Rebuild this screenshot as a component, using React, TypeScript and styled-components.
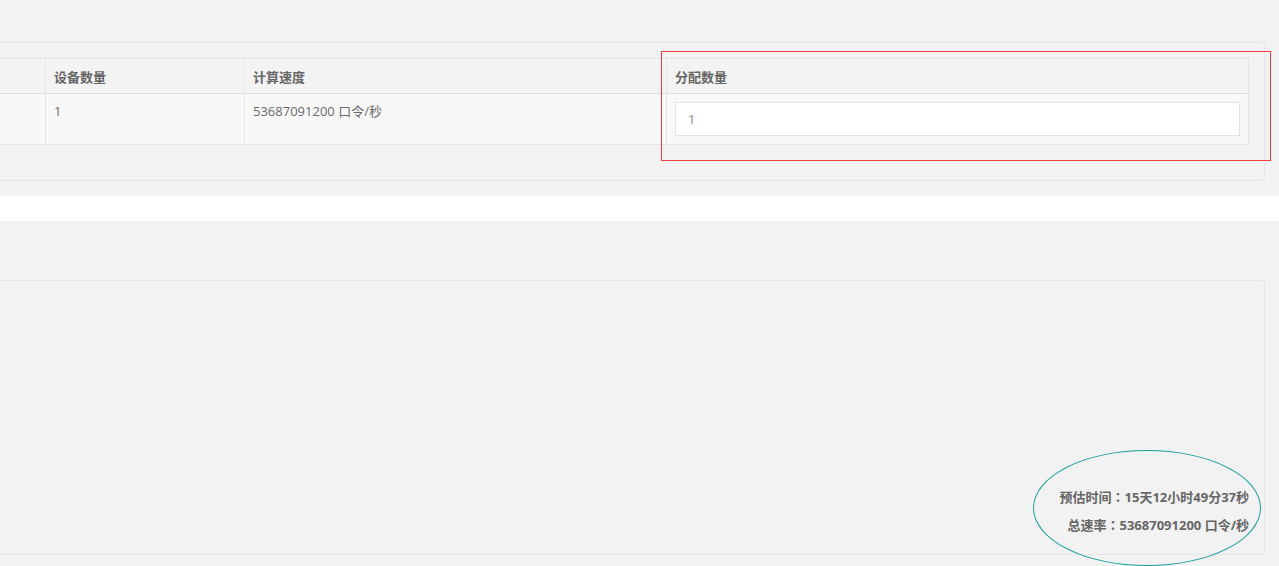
import React from "react";
import styled, { createGlobalStyle } from "styled-components";

const Global = createGlobalStyle`
  html, body { margin: 0; padding: 0; }
  body {
    background: #f2f2f2;
    font-family: "Open Sans", "Noto Sans CJK SC", sans-serif;
    font-size: 13px;
    color: #666;
    overflow: hidden;
  }
`;

const Page = styled.div`
  position: relative;
  width: 1279px;
  height: 566px;
  overflow: hidden;
`;

const TopSection = styled.section`
  padding: 42px 14px 15px 0;
`;

const Panel = styled.div<{ $h?: number }>`
  margin-left: -100px;
  border: 1px solid #e6e6e6;
  border-radius: 3px;
  background: #f2f2f2;
  box-sizing: border-box;
  ${(p) => (p.$h ? `height: ${p.$h}px;` : "")}
`;

const TablePanel = styled(Panel)`
  padding: 15px 15px 35px 15px;
`;

const Table = styled.table`
  width: 100%;
  table-layout: fixed;
  border-collapse: collapse;
  border: 1px solid #e3e3e3;
`;

const Th = styled.th`
  text-align: left;
  font-weight: 700;
  color: #666;
  background: #f3f3f3;
  height: 35px;
  padding: 0 8px;
  border-left: 1px solid #e6e6e6;
  border-bottom: 1px solid #dcdcdc;
  box-sizing: border-box;
`;

const Td = styled.td`
  vertical-align: top;
  background: #f8f8f8;
  color: #6a6a6a;
  padding: 8px 8px 8px 8px;
  height: 50px;
  line-height: 18px;
  border-left: 1px solid #e6e6e6;
  box-sizing: border-box;
`;

const Input = styled.input`
  display: block;
  width: 100%;
  height: 34px;
  box-sizing: border-box;
  border: 1px solid #e3e3e3;
  background: #fff;
  padding: 0 12px;
  font-family: "Open Sans", sans-serif;
  font-size: 13px;
  color: #888;
  outline: none;
`;

const WhiteBand = styled.div`
  height: 25px;
  background: #fff;
`;

const BottomSection = styled.section`
  padding: 59px 14px 0 0;
`;

const SummaryPanel = styled(Panel)`
  display: flex;
  flex-direction: column;
  justify-content: flex-end;
  align-items: flex-end;
  padding: 0 15px 15px 0;
`;

const SummaryLine = styled.div`
  font-weight: 700;
  color: #666;
  line-height: 28px;
  white-space: nowrap;
`;

const Colon = styled.span`
  font-family: "Noto Sans CJK TC", sans-serif;
`;

const RedBox = styled.div`
  position: absolute;
  left: 661px;
  top: 51px;
  width: 610px;
  height: 110px;
  box-sizing: border-box;
  border: 1px solid #f03c3c;
  pointer-events: none;
`;

const TealOval = styled.div`
  position: absolute;
  left: 1033px;
  top: 450px;
  width: 228px;
  height: 116px;
  box-sizing: border-box;
  border: 1px solid #1a9c9c;
  border-radius: 50%;
  pointer-events: none;
`;

export default function App() {
  return (
    <Page>
      <Global />
      <TopSection>
        <TablePanel>
          <Table>
            <colgroup>
              <col style={{ width: 129 }} />
              <col style={{ width: 199 }} />
              <col style={{ width: 422 }} />
              <col />
            </colgroup>
            <thead>
              <tr>
                <Th></Th>
                <Th>设备数量</Th>
                <Th>计算速度</Th>
                <Th>分配数量</Th>
              </tr>
            </thead>
            <tbody>
              <tr>
                <Td></Td>
                <Td>1</Td>
                <Td>53687091200 口令/秒</Td>
                <Td>
                  <Input defaultValue="1" />
                </Td>
              </tr>
            </tbody>
          </Table>
        </TablePanel>
      </TopSection>
      <WhiteBand />
      <BottomSection>
        <SummaryPanel $h={275}>
          <SummaryLine>
            预估时间<Colon>：</Colon>15天12小时49分37秒
          </SummaryLine>
          <SummaryLine>
            总速率<Colon>：</Colon>53687091200 口令/秒
          </SummaryLine>
        </SummaryPanel>
      </BottomSection>
      <RedBox />
      <TealOval />
    </Page>
  );
}
